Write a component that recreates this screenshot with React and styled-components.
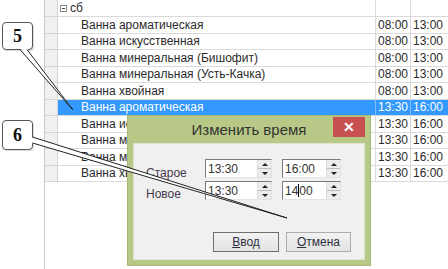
import React from 'react';
import styled, { createGlobalStyle } from 'styled-components';

const GlobalStyle = createGlobalStyle`
  html, body {
    margin: 0;
    padding: 0;
    background: #fff;
  }
  body {
    font-family: "Liberation Sans", Arial, sans-serif;
  }
`;

const Page = styled.div`
  position: relative;
  width: 448px;
  height: 269px;
  overflow: hidden;
  background: #fff;
`;

const Grid = styled.div`
  margin-left: 44px;
  height: 269px;
  border-left: 1px solid #c9c9c9;
  display: flex;
  flex-direction: column;
`;

const Row = styled.div`
  display: grid;
  grid-template-columns: 13px 318px 35px 44px;
  height: ${p => p.$h}px;
  flex-shrink: 0;
  font-size: 12px;
  color: ${p => (p.$selected ? '#fff' : '#2b2b2b')};
`;

const Cell = styled.div`
  box-sizing: border-box;
  border-right: 1px solid ${p => (p.$selected ? '#7fbfff' : '#dadada')};
  border-bottom: 1px solid #dadada;
  background: ${p => (p.$selected ? '#3399ff' : '#fff')};
  display: flex;
  align-items: center;
  padding-left: ${p => p.$pad || 2}px;
  white-space: nowrap;
  overflow: hidden;
`;

const Gutter = styled.div`
  box-sizing: border-box;
  background: #f0f0f0;
  border-right: 1px solid #d4d4d4;
  border-bottom: 1px solid #d4d4d4;
`;

const Toggle = styled.span`
  position: relative;
  width: 7px;
  height: 7px;
  box-sizing: border-box;
  border: 1px solid #8a8a8a;
  margin-right: 3px;
  &::after {
    content: '';
    position: absolute;
    left: 1px;
    right: 1px;
    top: 2px;
    height: 1px;
    background: #444;
  }
`;

const Dialog = styled.div`
  position: absolute;
  left: 127px;
  top: 115px;
  width: 244px;
  height: 151px;
  box-sizing: border-box;
  background: #b8c886;
  border: 1px solid #a6b873;
  display: flex;
  flex-direction: column;
  padding: 0 5px 5px 5px;
`;

const TitleBar = styled.div`
  position: relative;
  height: 27px;
  display: flex;
  align-items: center;
  justify-content: center;
  font-size: 15px;
  color: #333;
`;

const CloseButton = styled.div`
  position: absolute;
  right: 0;
  top: 1px;
  width: 32px;
  height: 20px;
  background: #c75050;
  color: #fff;
  display: flex;
  align-items: center;
  justify-content: center;
  font-size: 14px;
  font-weight: bold;
`;

const Panel = styled.div`
  flex: 1;
  background: #f0f0f0;
  border: 1px solid #dfe3cf;
  display: flex;
  flex-direction: column;
  padding: 15px 13px 7px 12px;
`;

const Fields = styled.div`
  display: grid;
  grid-template-columns: 59px 67px 69px;
  column-gap: 0;
  row-gap: 3px;
  & > :nth-child(3n) {
    margin-left: 10px;
  }
`;

const Label = styled.div`
  font-size: 12px;
  color: #45394f;
  padding-top: ${p => p.$top}px;
  height: 19px;
  box-sizing: border-box;
`;

const SpinBox = styled.div`
  height: 19px;
  box-sizing: border-box;
  display: flex;
  background: #fff;
  border-top: 1px solid #7a7a7a;
  border-left: 1px solid #7a7a7a;
  border-right: 1px solid #e3e3e3;
  border-bottom: 1px solid #e3e3e3;
`;

const SpinText = styled.div`
  flex: 1;
  font-size: 12px;
  color: #333;
  padding-left: 2px;
  display: flex;
  align-items: center;
`;

const Caret = styled.span`
  display: inline-block;
  width: 1px;
  height: 13px;
  background: #000;
`;

const Spinner = styled.div`
  width: 13px;
  display: flex;
  flex-direction: column;
  border-left: 1px solid #dcdcdc;
  background: #ececec;
`;

const Arrow = styled.div`
  flex: 1;
  display: flex;
  align-items: center;
  justify-content: center;
  border-bottom: ${p => (p.$up ? '1px solid #bdbdbd' : 'none')};
  &::after {
    content: '';
    border-left: 3px solid transparent;
    border-right: 3px solid transparent;
    ${p => (p.$up ? 'border-bottom: 3px solid #222;' : 'border-top: 3px solid #222;')}
  }
`;

const Buttons = styled.div`
  margin-top: auto;
  display: flex;
  justify-content: flex-end;
  gap: 7px;
`;

const Button = styled.div`
  width: ${p => p.$w}px;
  height: 20px;
  box-sizing: border-box;
  border: 1px solid ${p => (p.$primary ? '#6f6f6f' : '#adadad')};
  background: linear-gradient(#f2f2f2, #e3e3e3);
  display: flex;
  align-items: center;
  justify-content: center;
  font-size: 12px;
  color: #2f2f3f;
  u {
    text-decoration: underline;
  }
`;

const CalloutBox = styled.div`
  position: absolute;
  left: 2px;
  top: ${p => p.$top}px;
  width: 31px;
  height: ${p => p.$h}px;
  box-sizing: border-box;
  border: 1px solid #555;
  border-radius: 4px;
  background: #fff;
  box-shadow: 1px 1px 1px rgba(0, 0, 0, 0.15);
  display: flex;
  align-items: center;
  justify-content: center;
  font-family: "Liberation Serif", "Times New Roman", serif;
  font-weight: bold;
  font-size: 18px;
  color: #111;
`;

const Overlay = styled.svg`
  position: absolute;
  left: 0;
  top: 0;
  pointer-events: none;
`;

const rows = [
  { name: 'Ванна ароматическая', a: '08:00', b: '13:00' },
  { name: 'Ванна искусственная', a: '08:00', b: '13:00' },
  { name: 'Ванна минеральная (Бишофит)', a: '08:00', b: '13:00' },
  { name: 'Ванна минеральная (Усть-Качка)', a: '08:00', b: '13:00' },
  { name: 'Ванна хвойная', a: '08:00', b: '13:00' },
  { name: 'Ванна ароматическая', a: '13:30', b: '16:00', selected: true },
  { name: 'Ванна искусственная', a: '13:30', b: '16:00' },
  { name: 'Ванна минеральная (Бишофит)', a: '13:30', b: '16:00' },
  { name: 'Ванна минеральная (Усть-Качка)', a: '13:30', b: '16:00' },
  { name: 'Ванна хвойная', a: '13:30', b: '16:00' },
];

const Spin = ({ children }) => (
  <SpinBox>
    <SpinText>{children}</SpinText>
    <Spinner>
      <Arrow $up />
      <Arrow />
    </Spinner>
  </SpinBox>
);

export default function App() {
  return (
    <Page>
      <GlobalStyle />
      <Grid>
        <Row $h={17}>
          <Gutter />
          <Cell>
            <Toggle />
            сб
          </Cell>
          <Cell />
          <Cell />
        </Row>
        {rows.map((r, i) => (
          <Row key={i} $h={16.5} $selected={r.selected}>
            <Gutter />
            <Cell $pad={23} $selected={r.selected}>{r.name}</Cell>
            <Cell $selected={r.selected}>{r.a}</Cell>
            <Cell $selected={r.selected}>{r.b}</Cell>
          </Row>
        ))}
      </Grid>

      <Dialog>
        <TitleBar>
          Изменить время
          <CloseButton>✕</CloseButton>
        </TitleBar>
        <Panel>
          <Fields>
            <Label $top={7}>Старое</Label>
            <Spin>13:30</Spin>
            <Spin>16:00</Spin>
            <Label $top={6}>Новое</Label>
            <Spin>13:30</Spin>
            <Spin>
              14<Caret />00
            </Spin>
          </Fields>
          <Buttons>
            <Button $w={66} $primary>
              <u>В</u>вод
            </Button>
            <Button $w={65}>
              <u>О</u>тмена
            </Button>
          </Buttons>
        </Panel>
      </Dialog>

      <CalloutBox $top={22} $h={28}>5</CalloutBox>
      <CalloutBox $top={120} $h={30}>6</CalloutBox>

      <Overlay width="448" height="269">
        <polygon points="20,48 73,110 27,48" fill="#fff" />
        <line x1="20" y1="49.5" x2="73" y2="110" stroke="#222" strokeWidth="1" />
        <line x1="27" y1="49.5" x2="73" y2="110" stroke="#222" strokeWidth="1" />
        <polygon points="31,137 287,218 31,143" fill="#fff" />
        <line x1="32.5" y1="137" x2="287" y2="218" stroke="#222" strokeWidth="1" />
        <line x1="32.5" y1="143" x2="287" y2="218" stroke="#222" strokeWidth="1" />
      </Overlay>
    </Page>
  );
}
